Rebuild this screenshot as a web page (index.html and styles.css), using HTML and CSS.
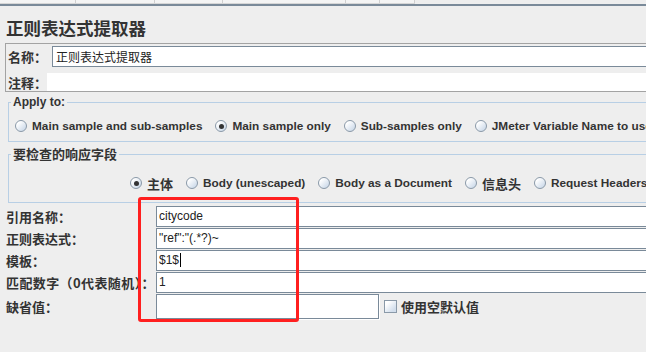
FILE: index.html
```html
<!DOCTYPE html>
<html lang="zh-CN">

<head>
    <meta charset="UTF-8">
    <meta name="viewport" content="width=device-width, initial-scale=1.0">
    <title>正则表达式提取器</title>
    <link rel="stylesheet" href="styles.css">
</head>

<body>
    <div class="topbar">
        <div class="topbar-cells">
            <span style="width: 76px"></span>
            <span style="width: 79px"></span>
            <span style="width: 68px"></span>
            <span style="width: 123px"></span>
            <span style="width: 34px"></span>
            <span style="width: 35px"></span>
        </div>
    </div>

    <h1 class="title">正则表达式提取器</h1>

    <div class="name-panel">
        <div class="name-row">
            <span class="name-label">名称：</span>
            <div class="text-field name-field">正则表达式提取器</div>
        </div>
        <div class="comment-row">
            <span class="comment-label">注释：</span>
            <div class="comment-field"></div>
        </div>
    </div>

    <fieldset class="group apply-group">
        <legend class="legend-latin">Apply to:</legend>
        <div class="radio-row">
            <span class="radio"><span class="radio-mark"></span>Main sample and sub-samples</span>
            <span class="radio"><span class="radio-mark checked"></span>Main sample only</span>
            <span class="radio"><span class="radio-mark"></span>Sub-samples only</span>
            <span class="radio"><span class="radio-mark"></span>JMeter Variable Name to use</span>
        </div>
    </fieldset>

    <fieldset class="group field-group">
        <legend class="legend-cjk">要检查的响应字段</legend>
        <div class="radio-row field-row">
            <span class="radio cjk"><span class="radio-mark checked"></span>主体</span>
            <span class="radio"><span class="radio-mark"></span>Body (unescaped)</span>
            <span class="radio"><span class="radio-mark"></span>Body as a Document</span>
            <span class="radio cjk"><span class="radio-mark"></span>信息头</span>
            <span class="radio"><span class="radio-mark"></span>Request Headers</span>
        </div>
    </fieldset>

    <div class="form">
        <span class="form-label">引用名称：</span>
        <div class="text-field">citycode</div>

        <span class="form-label">正则表达式：</span>
        <div class="text-field">"ref":"(.*?)~</div>

        <span class="form-label">模板：</span>
        <div class="text-field">$1$<span class="caret"></span></div>

        <span class="form-label wide-label">匹配数字（0代表随机）：</span>
        <div class="text-field">1</div>

        <span class="form-label last-label">缺省值：</span>
        <div class="default-row">
            <div class="text-field default-field"></div>
            <span class="checkbox"><span class="checkbox-mark"></span>使用空默认值</span>
        </div>
    </div>

    <div class="highlight"></div>
</body>

</html>
```

FILE: styles.css
```css
html,
body {
    overflow: hidden;
}

body {
    margin: 0;
    height: 352px;
    position: relative;
    background-color: #eeeeee;
    color: #333333;
    font-family: "Liberation Sans", "Noto Sans CJK SC", sans-serif;
    font-size: 12px;
}

.topbar {
    height: 4px;
    border-bottom: 2px solid #7a8a99;
}

.topbar-cells {
    display: flex;
    height: 3px;
    background-color: #f4f4f4;
    border-bottom: 1px solid #d6d6d6;
    width: 415px;
}

.topbar-cells span {
    box-sizing: border-box;
    border-right: 1px solid #d0d0d0;
}

.title {
    margin: 0 0 4px;
    padding: 9px 0 0 6px;
    height: 24px;
    line-height: 25px;
    font-family: "Noto Sans CJK SC", sans-serif;
    font-size: 17.5px;
    font-weight: bold;
}

/* name / comment box */
.name-panel {
    margin-left: 5px;
    height: 47px;
    border: 1px solid #a3a3a3;
    border-right: none;
}

.name-row {
    display: flex;
    align-items: center;
    padding-top: 2px;
}

.name-label,
.comment-label,
.form-label,
.checkbox,
.legend-cjk,
.radio.cjk {
    font-family: "Noto Sans CJK SC", sans-serif;
    font-size: 13px;
    font-weight: bold;
}

.name-label {
    margin-left: 2px;
    width: 44px;
}

.comment-row {
    display: flex;
    align-items: center;
    margin-top: 6px;
    height: 18px;
}

.comment-label {
    margin-left: 2px;
    width: 39px;
}

.comment-field {
    flex: 1;
    height: 18px;
    background: white;
}

.text-field {
    box-sizing: border-box;
    height: 21px;
    padding-left: 2px;
    line-height: 19px;
    border: 1px solid #7a8a99;
    border-right: none;
    background: white;
    color: #222222;
    font-size: 12px;
    white-space: nowrap;
}

.name-field {
    flex: 1;
    padding-left: 3px;
    font-family: "Noto Sans CJK SC", sans-serif;
}

/* titled groups */
.group {
    min-width: 0;
    margin: 0 0 0 8px;
    border: 1px solid #b8cfe5;
    border-right: none;
}

.group legend {
    padding: 0 2px;
}

.apply-group {
    margin-top: 3px;
    padding: 7px 0 5px 2px;
}

.legend-latin {
    height: 14px;
    line-height: 14px;
    font-weight: bold;
}

.legend-cjk {
    height: 16px;
    line-height: 16px;
}

.field-group {
    margin-top: 4px;
    padding: 11px 0 9px 2px;
}

.radio-row {
    display: flex;
    gap: 13px;
    height: 20px;
    margin-left: 4px;
    align-items: center;
    white-space: nowrap;
    font-size: 11.8px;
    font-weight: bold;
}

.field-row {
    margin-left: 119px;
}

.radio {
    display: flex;
    align-items: center;
    gap: 5px;
}

.radio-mark {
    box-sizing: border-box;
    position: relative;
    width: 12px;
    height: 12px;
    border: 1px solid #8a99a8;
    border-radius: 50%;
    background: linear-gradient(135deg, #ffffff 20%, #d2deec 80%);
}

.radio-mark.checked::after {
    content: "";
    position: absolute;
    left: 2.5px;
    top: 2.5px;
    width: 5px;
    height: 5px;
    border-radius: 50%;
    background: #333333;
}

/* extractor fields */
.form {
    display: grid;
    grid-template-columns: 150px 1fr;
    grid-auto-rows: 21px;
    row-gap: 1px;
    margin-left: 6px;
    padding-top: 3px;
}

.form-label {
    line-height: 21px;
    white-space: nowrap;
}

.wide-label {
    letter-spacing: 0.4px;
}

.last-label {
    line-height: 25px;
}

.caret {
    display: inline-block;
    width: 1px;
    height: 14px;
    margin-left: 1px;
    vertical-align: -3px;
    background: #000000;
}

.default-row {
    display: flex;
    align-items: center;
    height: 25px;
}

.default-field {
    width: 223px;
    height: 25px;
    border-right: 1px solid #7a8a99;
    box-shadow: 1px 1px 0 #ffffff;
}

.checkbox {
    display: flex;
    align-items: center;
    gap: 4px;
    margin-left: 5px;
}

.checkbox-mark {
    box-sizing: border-box;
    width: 13px;
    height: 13px;
    border: 1px solid #8a99a8;
    background: linear-gradient(135deg, #ffffff 20%, #d2deec 80%);
}

/* red annotation drawn on the screenshot */
.highlight {
    position: absolute;
    left: 138px;
    top: 197px;
    width: 161px;
    height: 125px;
    box-sizing: border-box;
    border: 3px solid #ff1f1f;
    border-radius: 3px;
}
```
